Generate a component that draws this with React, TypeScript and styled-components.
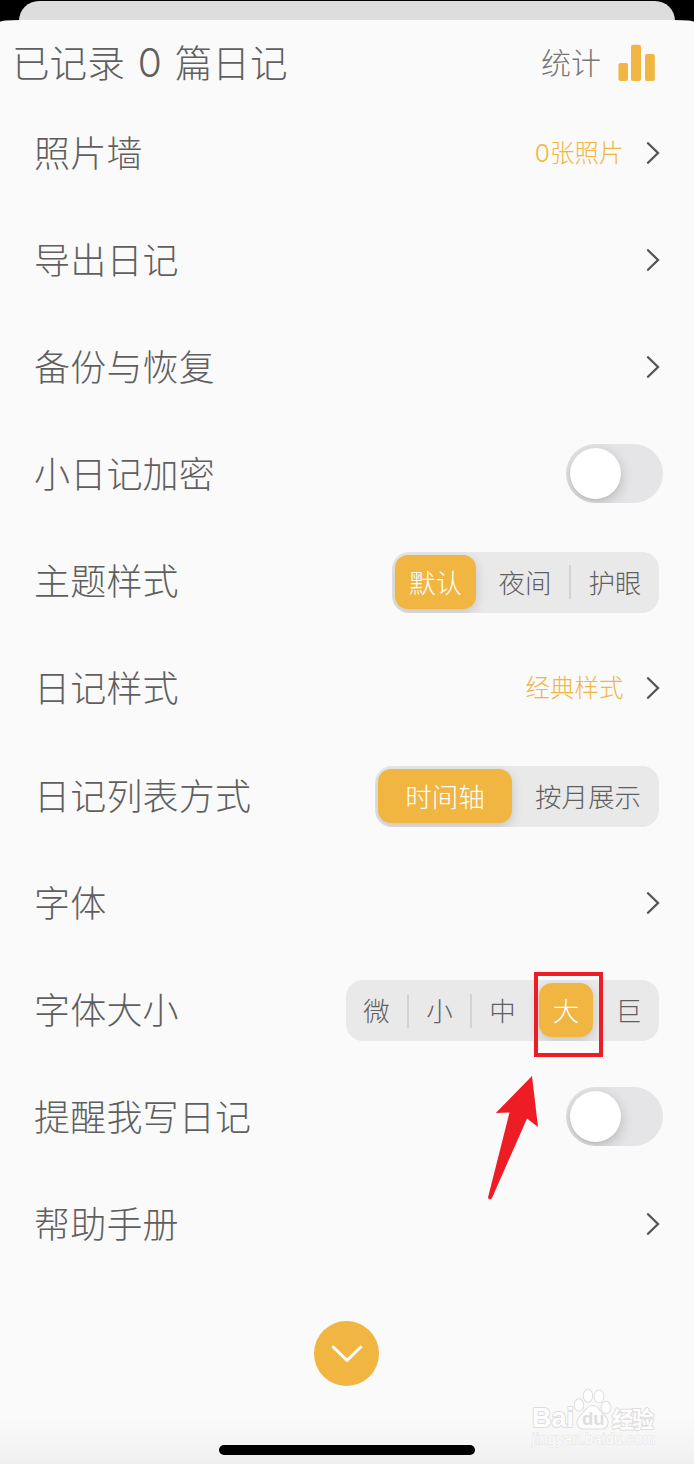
import React from "react";
import styled, { createGlobalStyle } from "styled-components";

const amber = "#f1b541";
const ink = "#5f5f5f";
const paper = "#fafafa";

const GlobalStyle = createGlobalStyle`
  * { box-sizing: border-box; }
  body {
    margin: 0;
    background: #000;
    font-family: "Noto Sans CJK SC", sans-serif;
    font-weight: 300;
  }
`;

const Screen = styled.div`
  position: relative;
  width: 694px;
  height: 1464px;
  overflow: hidden;
  background: #000;
  display: flex;
  flex-direction: column;
`;

const BackSheet = styled.div`
  flex: none;
  height: 20px;
  margin: 1px 19px -1px;
  border-radius: 20px 20px 0 0;
  background: #dddddd;
`;

const Sheet = styled.main`
  flex: 1;
  display: flex;
  flex-direction: column;
  border-radius: 20px 20px 0 0 / 2px 2px 0 0;
  background: linear-gradient(to bottom, ${paper} 0, ${paper} 1398px, #f0f0f0 1444px);
`;

const Header = styled.header`
  height: 79.4px;
  padding: 6px 39px 0 12px;
  display: flex;
  align-items: center;
  justify-content: space-between;
  color: ${ink};
`;

const Title = styled.h1`
  margin: 0 0 1px;
  font-size: 37.6px;
  font-weight: 300;
  line-height: 54px;
  white-space: pre;
`;

const Count = styled.span`
  display: inline-block;
  width: 50px;
  text-align: center;
  font-family: Inter, sans-serif;
  font-size: 39px;
`;

const StatsButton = styled.div`
  display: flex;
  align-items: center;
  gap: 17px;
  font-size: 30px;
  line-height: 44px;
  color: #777;
`;

const StatsText = styled.span`
  margin-bottom: 4px;
`;

const Row = styled.div`
  height: 107.1px;
  flex: none;
  padding: 0 31px 0 34px;
  display: flex;
  align-items: center;
  justify-content: space-between;
`;

const Label = styled.span`
  margin-bottom: 4px;
  font-size: 36px;
  letter-spacing: 0.2px;
  line-height: 52px;
  color: ${ink};
`;

const LinkSide = styled.div`
  display: flex;
  align-items: center;
  gap: 22.5px;
  padding-right: 3px;
`;

const Value = styled.span`
  font-family: Inter, "Noto Sans CJK SC", sans-serif;
  font-size: 24.5px;
  line-height: 36px;
  color: ${amber};
`;

const Track = styled.div`
  width: 97px;
  height: 59px;
  margin-bottom: 1px;
  padding: 4px;
  border-radius: 30px;
  background: #e5e5e7;
  overflow: hidden;
`;

const Knob = styled.div`
  width: 51px;
  height: 51px;
  border-radius: 50%;
  background: #fff;
  box-shadow: 0 4px 14px rgba(0, 0, 0, 0.2), 0 1px 2px rgba(0, 0, 0, 0.06);
`;

const Segments = styled.div`
  height: 61px;
  margin: 2px 4px 0 0;
  padding: 3px;
  display: flex;
  align-items: center;
  border-radius: 17px;
  background: #e9e9ea;
  overflow: hidden;
`;

const Segment = styled.div<{ $w: number; $shift?: number; $active?: boolean }>`
  width: ${(p) => p.$w}px;
  height: 54px;
  margin-bottom: 1px;
  display: flex;
  align-items: center;
  justify-content: center;
  text-indent: ${(p) => (p.$shift ?? 0) * 2}px;
  white-space: nowrap;
  border-radius: 13px;
  font-size: 26.5px;
  line-height: 38px;
  color: ${(p) => (p.$active ? "#fff" : ink)};
  background: ${(p) => (p.$active ? amber : "transparent")};
  box-shadow: ${(p) => (p.$active ? "0 4px 12px rgba(0,0,0,0.16)" : "none")};
`;

const Divider = styled.i<{ $visible: boolean }>`
  width: 2px;
  height: 34px;
  background: ${(p) => (p.$visible ? "#d3d3d5" : "transparent")};
`;

const CloseButton = styled.div`
  width: 65px;
  height: 65px;
  margin: 43.6px 0 0 314.4px;
  display: flex;
  align-items: center;
  justify-content: center;
  border-radius: 50%;
  background: ${amber};
`;

const HomeIndicator = styled.div`
  width: 256px;
  height: 10px;
  margin: auto auto 9px;
  border-radius: 5px;
  background: #000;
`;

const HighlightBox = styled.div`
  position: absolute;
  left: 534px;
  top: 972px;
  width: 69px;
  height: 85px;
  border: 4px solid #ee1c25;
`;

const Pointer = styled.svg`
  position: absolute;
  left: 486px;
  top: 1074px;
`;

const Watermark = styled.svg`
  position: absolute;
  left: 526px;
  top: 1384px;
  paint-order: stroke;
`;

const Chevron = () => (
  <svg width="14" height="22" viewBox="0 0 14 22" fill="none" stroke="#555" strokeWidth="2.3">
    <path d="M2 1.2 12 11 2 20.800" strokeLinecap="round" />
  </svg>
);

const BarsIcon = () => (
  <svg width="37" height="37" viewBox="0 0 37 37" fill={amber}>
    <rect x="0.5" y="19" width="9.5" height="18" rx="2" />
    <rect x="13" y="0.8" width="10" height="36.2" rx="2" />
    <rect x="27" y="10" width="9.8" height="27" rx="2" />
  </svg>
);

const Toggle = () => (
  <Track>
    <Knob />
  </Track>
);

type Option = { text: string; w: number; shift?: number; active?: boolean };

const SegmentedControl = ({ options }: { options: Option[] }) => (
  <Segments>
    {options.map((o, i) => (
      <React.Fragment key={o.text}>
        {i > 0 && <Divider $visible={!o.active && !options[i - 1].active} />}
        <Segment $w={o.w} $shift={o.shift} $active={o.active}>
          {o.text}
        </Segment>
      </React.Fragment>
    ))}
  </Segments>
);

const LinkRow = ({ label, value }: { label: string; value?: string }) => (
  <Row>
    <Label>{label}</Label>
    <LinkSide>
      {value && <Value>{value}</Value>}
      <Chevron />
    </LinkSide>
  </Row>
);

const themeOptions: Option[] = [
  { text: "默认", w: 81, active: true },
  { text: "夜间", w: 91, shift: 1.5 },
  { text: "护眼", w: 85, shift: 1.5 },
];
const listOptions: Option[] = [
  { text: "时间轴", w: 134, active: true },
  { text: "按月展示", w: 142, shift: 3 },
];
const sizeOptions: Option[] = [
  { text: "微", w: 58, shift: -1.5 },
  { text: "小", w: 61 },
  { text: "中", w: 65, shift: -2 },
  { text: "大", w: 54, active: true },
  { text: "巨", w: 61, shift: 3 },
];

export default function App() {
  return (
    <Screen>
      <GlobalStyle />
      <BackSheet />
      <Sheet>
        <Header>
          <Title>
            已记录<Count> 0 </Count>篇日记
          </Title>
          <StatsButton>
            <StatsText>统计</StatsText>
            <BarsIcon />
          </StatsButton>
        </Header>
        <LinkRow label="照片墙" value="0张照片" />
        <LinkRow label="导出日记" />
        <LinkRow label="备份与恢复" />
        <Row>
          <Label>小日记加密</Label>
          <Toggle />
        </Row>
        <Row>
          <Label>主题样式</Label>
          <SegmentedControl options={themeOptions} />
        </Row>
        <LinkRow label="日记样式" value="经典样式" />
        <Row>
          <Label>日记列表方式</Label>
          <SegmentedControl options={listOptions} />
        </Row>
        <LinkRow label="字体" />
        <Row>
          <Label>字体大小</Label>
          <SegmentedControl options={sizeOptions} />
        </Row>
        <Row>
          <Label>提醒我写日记</Label>
          <Toggle />
        </Row>
        <LinkRow label="帮助手册" />
        <CloseButton>
          <svg width="32" height="18" viewBox="0 0 32 18" fill="none" stroke="#fff" strokeWidth="3">
            <path d="M2.2 2 16 15.4 29.8 2" strokeLinecap="round" strokeLinejoin="round" />
          </svg>
        </CloseButton>
        <HomeIndicator />
      </Sheet>
      <HighlightBox />
      <Pointer width="54" height="128" viewBox="0 0 54 128" fill="#ee1c25">
        <path d="M46 2 52 53 41 44.500 6 124Q3 127 2 123.500L23.500 38.500 9.800 39Z" />
      </Pointer>
      <Watermark
        width="140"
        height="68"
        viewBox="0 0 140 68"
        fill="#fdfdfd"
        stroke="#dedede"
        strokeWidth="2"
        strokeLinejoin="round"
      >
        <g fontFamily="Liberation Sans, sans-serif" fontWeight="700">
          <text x="6" y="43" fontSize="28" textLength="42" lengthAdjust="spacingAndGlyphs">Bai</text>
          <ellipse cx="53" cy="21" rx="4.300" ry="5.800" />
          <ellipse cx="62" cy="11.800" rx="4.300" ry="6" />
          <ellipse cx="73" cy="12.500" rx="4.500" ry="6" />
          <ellipse cx="80" cy="23.500" rx="4.500" ry="5.800" />
          <path d="M66.500 22C72 22 74 28 78 31.500C84 37 82 44.500 75 44.500C70 44.500 64 44.500 58 44.500C51 44.500 49 37 55 31.500C59 28 61 22 66.500 22Z" />
          <text x="56" y="41" fontSize="18.500" fill="#dedede" stroke="none">du</text>
          <text x="86" y="42.500" fontSize="22" textLength="42" fontFamily="Noto Sans CJK SC, sans-serif">经验</text>
        </g>
        <text x="6" y="60" fontSize="14" strokeWidth="1.300" stroke="#e6e6e6" fontFamily="Liberation Sans, sans-serif" fontWeight="400" textLength="123">jingyan.baidu.com</text>
      </Watermark>
    </Screen>
  );
}
